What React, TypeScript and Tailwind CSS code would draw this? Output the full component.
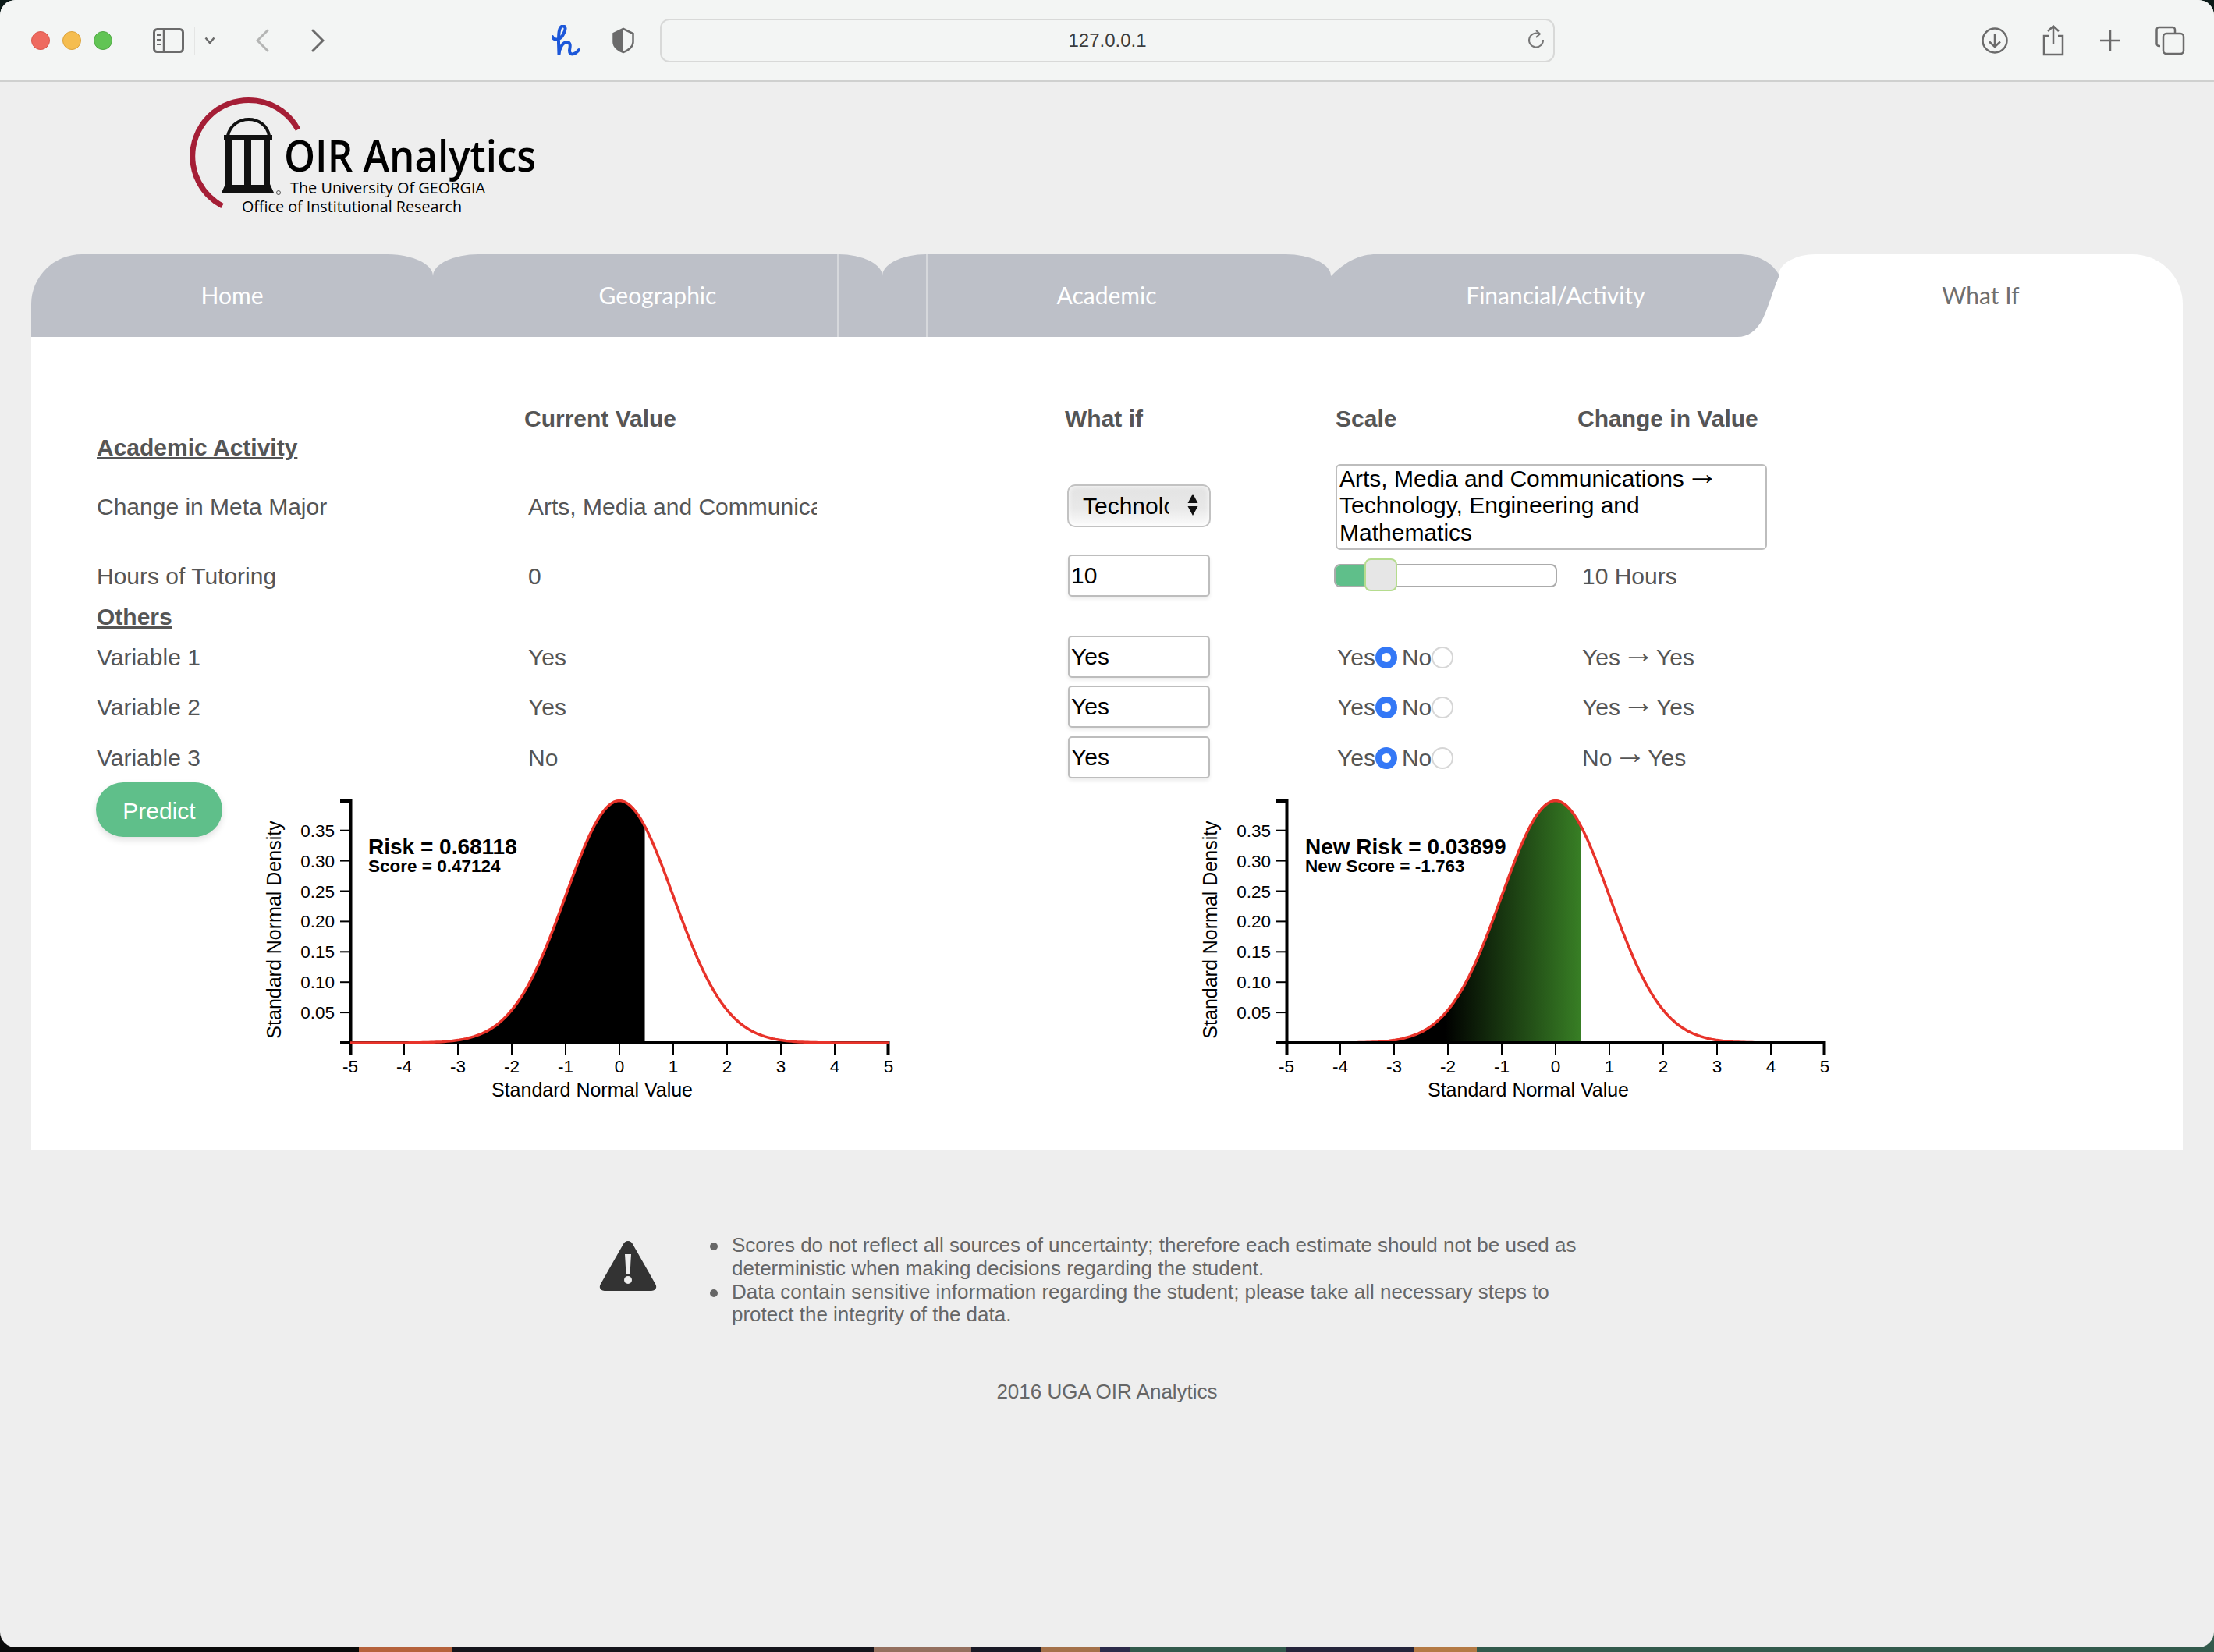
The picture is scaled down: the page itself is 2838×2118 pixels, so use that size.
import React from "react";

const sans = "font-['Liberation_Sans',Arial,sans-serif]";

function pdf(z: number) {
  return Math.exp((-z * z) / 2) / Math.sqrt(2 * Math.PI);
}
const X = (v: number) => 794 + v * 69;
const Y = (d: number) => 1337 - d * 778;

function curve(from: number, to: number) {
  const pts: string[] = [];
  for (let v = from; v <= to + 0.0001; v += 0.05) {
    pts.push(`${X(v).toFixed(1)} ${Y(pdf(v)).toFixed(1)}`);
  }
  return pts;
}

function Chart({ l1, l2, fill, grad, lx }: { l1: string; l2: string; fill: string; grad?: boolean; lx: number }) {
  const shade = [...curve(-5, 0.45), `${X(0.47124)} ${Y(pdf(0.47124))}`];
  const area = `M${X(-5)} 1337 L${shade.join(" L")} L${X(0.47124)} 1337 Z`;
  const ys = [0.05, 0.1, 0.15, 0.2, 0.25, 0.3, 0.35];
  const xs = [-5, -4, -3, -2, -1, 0, 1, 2, 3, 4, 5];
  const redLine = <path d={`M${curve(-5, 5).join(" L")}`} fill="none" stroke="#e8332a" strokeWidth="3.5" />;
  return (
    <svg width="830" height="410" viewBox="330 1010 830 410" className="shrink-0">
      {grad && (
        <defs>
          <linearGradient id="greenfade" gradientUnits="userSpaceOnUse" x1="652" x2="827" y1="0" y2="0">
            <stop offset="0" stopColor="#000000" />
            <stop offset="1" stopColor="#387f25" />
          </linearGradient>
        </defs>
      )}
      <path d={area} fill={fill} />
      {grad && redLine}
      <g fontFamily="'Liberation Sans',Arial,sans-serif" fill="#000">
        <path d="M436 1027H449.5V1337M436 1337H1138.5V1352M449.5 1337V1352" fill="none" stroke="#000" strokeWidth="4" />
        {ys.map((v) => (
          <g key={v}>
            <line x1="436" x2="449" y1={Y(v)} y2={Y(v)} stroke="#000" strokeWidth="2" />
            <text x="429" y={Y(v) + 8} textAnchor="end" fontSize="22.5">
              {v.toFixed(2)}
            </text>
          </g>
        ))}
        {xs.map((v) => (
          <g key={v}>
            <line x1={X(v)} x2={X(v)} y1="1337" y2="1352" stroke="#000" strokeWidth="2" />
            <text x={X(v)} y="1375" textAnchor="middle" fontSize="22.5">
              {v}
            </text>
          </g>
        ))}
        <text x="759" y="1406" textAnchor="middle" fontSize="25">
          Standard Normal Value
        </text>
        <text transform="translate(360 1192) rotate(-90)" textAnchor="middle" fontSize="25">
          Standard Normal Density
        </text>
        <text x={lx} y="1095" fontSize="28" fontWeight="700">
          {l1}
        </text>
        <text x={lx} y="1118" fontSize="22.5" fontWeight="700">
          {l2}
        </text>
      </g>
      {!grad && redLine}
    </svg>
  );
}

function Logo() {
  return (
    <svg width="460" height="160" viewBox="240 120 460 160" className="block">
      <path d="M382 166A72 72 0 1 0 285 264" fill="none" stroke="#a51e36" strokeWidth="7" />
      <path d="M292 174C298 146 340 146 345 174" fill="none" stroke="#111" strokeWidth="4" />
      <path d="M287 173H349V179H346V236L351 247H284L289 236V179H287Z" fill="#111" />
      <rect x="298" y="179" width="15" height="58" fill="#eeeeee" />
      <rect x="322" y="179" width="16" height="58" fill="#eeeeee" />
      <circle cx="357" cy="247" r="2.5" fill="none" stroke="#555" strokeWidth="1" />
      <g fontFamily="'Open Sans','Noto Sans',sans-serif" fill="#000">
        <text x="364" y="220" fontSize="56" fontWeight="600" textLength="323" lengthAdjust="spacingAndGlyphs">
          OIR Analytics
        </text>
        <text x="372" y="248" fontSize="20" fontWeight="500" textLength="250" lengthAdjust="spacingAndGlyphs">
          The University Of GEORGIA
        </text>
        <text x="310" y="272" fontSize="20" fontWeight="500" textLength="282" lengthAdjust="spacingAndGlyphs">
          Office of Institutional Research
        </text>
      </g>
    </svg>
  );
}

function Toolbar() {
  const gray = "#6b6b6b";
  return (
    <div className="flex h-[105px] shrink-0 items-center border-b-2 border-[#cfd0cf] bg-[#f3f5f4] pl-[40px]">
      <div className="h-[24px] w-[24px] rounded-full border border-[#d9574c] bg-[#ee6a5f]" />
      <div className="ml-[16px] h-[24px] w-[24px] rounded-full border border-[#dca33c] bg-[#f5bd4f]" />
      <div className="ml-[16px] h-[24px] w-[24px] rounded-full border border-[#51a845] bg-[#61c454]" />
      <svg width="40" height="32" viewBox="0 0 40 32" className="ml-[52px]">
        <rect x="1.5" y="1.5" width="37" height="29" rx="4" fill="none" stroke={gray} strokeWidth="3" />
        <line x1="14" x2="14" y1="2" y2="30" stroke={gray} strokeWidth="2.5" />
        <path d="M5 9h5M5 15h5M5 21h5" stroke={gray} strokeWidth="2" />
      </svg>
      <div className="ml-[13px] h-[36px] w-px bg-[#e4e5e4]" />
      <svg width="14" height="10" viewBox="0 0 14 10" className="ml-[12px]">
        <path d="M1.5 1.5L7 8L12.5 1.5" fill="none" stroke={gray} strokeWidth="2.5" />
      </svg>
      <svg width="17" height="30" viewBox="0 0 17 30" className="ml-[52px]">
        <path d="M15 2L2 15L15 28" fill="none" stroke="#b4b5b4" strokeWidth="3" strokeLinecap="round" />
      </svg>
      <svg width="17" height="30" viewBox="0 0 17 30" className="ml-[54px]">
        <path d="M2 2L15 15L2 28" fill="none" stroke={gray} strokeWidth="3" strokeLinecap="round" />
      </svg>
      <svg width="36" height="40" viewBox="0 0 36 40" className="ml-[291px]">
        <path d="M1 15C3 20 11 20 15 12C19 5 18 1 14 1.5C9 2 9 13 9 23L9.5 38C10 30 14 22 20 22C26 23 23 30 23 33C23 39 29 39 35 32" fill="none" stroke="#1c57d9" strokeWidth="4" strokeLinecap="round" />
      </svg>
      <svg width="28" height="34" viewBox="0 0 28 34" className="ml-[42px]">
        <path d="M14 2L26.5 8V19C26.5 25 20 30 14 32C8 30 1.5 25 1.5 19V8Z" fill="none" stroke={gray} strokeWidth="2.5" />
        <path d="M14 2L1.5 8V19C1.5 25 8 30 14 32Z" fill={gray} />
      </svg>
      <div className={`relative ml-[33px] flex h-[56px] w-[1147px] items-center justify-center rounded-[12px] border-2 border-[#d8d9d8] bg-[#f3f5f4] text-[24px] text-[#3c3c3c] ${sans}`}>
        <span>127.0.0.1</span>
        <svg width="26" height="28" viewBox="0 0 26 28" className="absolute right-[8px] top-[12px]">
          <path d="M16 5.5A9 9 0 1 0 21 13" fill="none" stroke="#777" strokeWidth="2" />
          <path d="M12 1L17 5.5L12 10" fill="none" stroke="#777" strokeWidth="2" />
        </svg>
      </div>
      <svg width="36" height="36" viewBox="0 0 36 36" className="ml-[546px]">
        <circle cx="18" cy="18" r="15.5" fill="none" stroke={gray} strokeWidth="2.5" />
        <path d="M18 9V26M11 19.5L18 26L25 19.5" fill="none" stroke={gray} strokeWidth="2.5" />
      </svg>
      <svg width="30" height="40" viewBox="0 0 30 40" className="ml-[42px]">
        <path d="M9 14H3V38H27V14H21" fill="none" stroke={gray} strokeWidth="2.5" />
        <path d="M15 25V2M8 8L15 1.5L22 8" fill="none" stroke={gray} strokeWidth="2.5" />
      </svg>
      <svg width="28" height="28" viewBox="0 0 28 28" className="ml-[44px]">
        <path d="M14 1V27M1 14H27" stroke={gray} strokeWidth="2.5" />
      </svg>
      <svg width="38" height="38" viewBox="0 0 38 38" className="ml-[44px]">
        <path d="M6 26H4.5A3 3 0 0 1 1.5 23V5A3 3 0 0 1 4.5 2H22A3 3 0 0 1 25 5V9" fill="none" stroke={gray} strokeWidth="2.5" />
        <rect x="10" y="10" width="26" height="26" rx="4" fill="none" stroke={gray} strokeWidth="2.5" />
      </svg>
    </div>
  );
}

function Tabs() {
  const tab = "flex h-full items-center justify-center pb-[2px] text-[30px] text-white bg-[#bdc0c8] font-['Lato',sans-serif]";
  return (
    <div className="mx-[40px] mt-[46px] flex h-[106px]">
      <div className={`${tab} w-[515px] rounded-[65px_58px_0_0/64px_28px_0_0]`}>Home</div>
      <div className={`${tab} relative w-[576px] rounded-[58px_56px_0_0/28px_28px_0_0]`}>
        Geographic
        <div className="absolute bottom-0 right-[56px] top-0 w-[2px] bg-[#d6d8dc]" />
      </div>
      <div className={`${tab} relative w-[575px] rounded-[56px_58px_0_0/28px_28px_0_0]`}>
        Academic
        <div className="absolute bottom-0 left-[56px] top-0 w-[2px] bg-[#d6d8dc]" />
      </div>
      <div className="relative h-full w-[574px]">
        <div className="absolute bottom-0 right-0 h-[78px] w-[60px] bg-white" />
        <div className={`${tab} relative w-[576px] [clip-path:path('M0_28C20_8_38_0_58_0H521C548_0_565_10_575_27C568_42_560_70_554_82C546_98_535_106_521_106H0Z')]`}>
          Financial/Activity
        </div>
      </div>
      <div className="flex h-full w-[518px] items-center justify-center rounded-[47px_65px_0_0/27px_64px_0_0] bg-white pb-[2px] font-['Lato',sans-serif] text-[30px] text-[#6f6f6f]">
        What If
      </div>
    </div>
  );
}

const grid = "grid grid-cols-[548px_693px_347px_310px_1fr] items-center";

function Arrow() {
  return <span className="mx-[2px] inline-block h-[20px] -translate-y-[3px] text-[42px] leading-[20px]">→</span>;
}

function ValueInput({ value }: { value: string }) {
  return (
    <input
      readOnly
      value={value}
      className={`ml-[4px] h-[54px] w-[182px] rounded-[5px] border-2 border-[#bdbdbd] bg-white pl-[2px] text-[30px] text-black shadow-[0_3px_5px_rgba(0,0,0,0.08)] outline-none ${sans}`}
    />
  );
}

function Radio({ on }: { on: boolean }) {
  return on ? (
    <span className="mt-[2px] inline-block h-[28px] w-[28px] rounded-full border-[8px] border-[#3478f6] bg-white" />
  ) : (
    <span className="mt-[2px] inline-block h-[28px] w-[28px] rounded-full border-2 border-[#d6d6d6] bg-white" />
  );
}

function VarRow({ name, cur, from, mt }: { name: string; cur: string; from: string; mt: string }) {
  return (
    <div className={`${grid} h-[54px] ${mt}`}>
      <div>{name}</div>
      <div className="pl-[5px]">{cur}</div>
      <div>
        <ValueInput value="Yes" />
      </div>
      <div className="flex items-center pl-[2px]">
        <span>Yes</span>
        <span className="flex"><Radio on /></span>
        <span className="ml-[6px]">No</span>
        <span className="flex"><Radio on={false} /></span>
      </div>
      <div className="pl-[6px]">
        {from}
        <Arrow />
        Yes
      </div>
    </div>
  );
}

function Panel() {
  return (
    <div className={`mx-[40px] h-[1042px] bg-white pl-[84px] pt-[82px] text-[30px] text-[#555] ${sans}`}>
      <div className={`${grid} h-[36px] font-bold`}>
        <div />
        <div>Current Value</div>
        <div>What if</div>
        <div>Scale</div>
        <div>Change in Value</div>
      </div>
      <div className="mt-[4px] flex h-[38px] items-center font-bold underline">Academic Activity</div>
      <div className={`${grid} mt-[3px] h-[110px]`}>
        <div className="pb-[2px]">Change in Meta Major</div>
        <div className="pb-[2px] pl-[5px]">
          <div className="w-[370px] overflow-hidden whitespace-nowrap">Arts, Media and Communications</div>
        </div>
        <div className="relative mb-[4px]">
          <select className={`ml-[3px] block h-[55px] w-[184px] appearance-none rounded-[10px] border-2 border-[#c2c2c2] bg-[linear-gradient(#e3e3e3,#e8e8e8_55%,#fbfbfb)] pl-[18px] pr-[52px] text-[30px] text-black shadow-[inset_0_0_7px_rgba(255,255,255,0.9)] outline-none ${sans}`}>
            <option>Technology, Engineering and Mathematics</option>
          </select>
          <svg width="14" height="28" viewBox="0 0 14 28" className="absolute left-[157px] top-[12px]">
            <path d="M7 0L13.5 12H0.5ZM7 28L0.5 16H13.5Z" fill="#111" />
          </svg>
        </div>
        <div className="h-[110px] w-[553px] rounded-[6px] border-2 border-[#bdbdbd] bg-white px-[3px] leading-[34.4px] text-black">
          Arts, Media and Communications
          <Arrow />
          <br />
          Technology, Engineering and Mathematics
        </div>
        <div />
      </div>
      <div className={`${grid} mt-[6px] h-[54px]`}>
        <div>Hours of Tutoring</div>
        <div className="pl-[5px]">0</div>
        <div>
          <ValueInput value="10" />
        </div>
        <div className="relative -ml-[2px] h-[30px] w-[286px] rounded-[8px] border-2 border-[#ababab] bg-white">
          <div className="h-full w-[38px] rounded-l-[6px] bg-[#5fbf8a]" />
          <div className="absolute left-[37px] top-[-9px] h-[42px] w-[42px] rounded-[8px] border-2 border-[#b5dc8e] bg-[#e6e6e6]" />
        </div>
        <div className="pl-[6px]">10 Hours</div>
      </div>
      <div className="mt-[9px] flex h-[32px] items-center font-bold underline">Others</div>
      <VarRow name="Variable 1" cur="Yes" from="Yes" mt="mt-[9px]" />
      <VarRow name="Variable 2" cur="Yes" from="Yes" mt="mt-[10px]" />
      <VarRow name="Variable 3" cur="No" from="No" mt="mt-[11px]" />
      <div className="mt-[5px] flex items-start">
        <button className="-ml-[1px] h-[70px] w-[162px] shrink-0 rounded-[35px] bg-[#5fbf8a] pt-[2px] text-[30px] text-white shadow-[0_4px_8px_rgba(0,0,0,0.12)]">
          Predict
        </button>
        <div className="ml-[45px] mt-[7px] flex">
          <Chart l1="Risk = 0.68118" l2="Score = 0.47124" fill="#000" lx={472} />
          <div className="ml-[370px]">
            <Chart l1="New Risk = 0.03899" l2="New Score = -1.763" fill="url(#greenfade)" grad lx={473} />
          </div>
        </div>
      </div>
    </div>
  );
}

function Bullet({ children }: { children: React.ReactNode }) {
  return (
    <li className="flex">
      <span className="ml-[-28px] mr-[18px] mt-[11px] h-[10px] w-[10px] shrink-0 rounded-full bg-[#666]" />
      <span>{children}</span>
    </li>
  );
}

function Footer() {
  return (
    <div className={`text-[#666] ${sans}`}>
      <div className="ml-[768px] mt-[108px] flex">
        <svg width="74" height="66" viewBox="0 0 74 66" className="mt-[8px] shrink-0">
          <path d="M37 1C40 1 42 3 43 5L72 56C75 61 72 65 67 65H7C2 65 -1 61 2 56L31 5C32 3 34 1 37 1Z" fill="#333" />
          <path d="M33 18H41L39.5 43H34.5Z" fill="#eee" />
          <circle cx="37" cy="51" r="5" fill="#eee" />
        </svg>
        <ul className="ml-[96px] w-[1100px] text-[26px] leading-[29.8px]">
          <Bullet>Scores do not reflect all sources of uncertainty; therefore each estimate should not be used as deterministic when making decisions regarding the student.</Bullet>
          <Bullet>Data contain sensitive information regarding the student; please take all necessary steps to protect the integrity of the data.</Bullet>
        </ul>
      </div>
      <div className="mt-[68px] text-center text-[26px] leading-[30px]">2016 UGA OIR Analytics</div>
    </div>
  );
}

function Wallpaper() {
  const bits: [string, string][] = [
    ["w-[460px]", "bg-[#0a0a0a]"],
    ["w-[120px]", "bg-[#b5623c]"],
    ["w-[540px]", "bg-[#16151c]"],
    ["w-[125px]", "bg-[#94705f]"],
    ["w-[90px]", "bg-[#1a1a26]"],
    ["w-[75px]", "bg-[#a4714a]"],
    ["w-[38px]", "bg-[#2d2c4a]"],
    ["w-[200px]", "bg-[#325a4c]"],
    ["w-[165px]", "bg-[#25253b]"],
    ["w-[80px]", "bg-[#b47a45]"],
    ["flex-1", "bg-[#325a4c]"],
  ];
  return (
    <div className="absolute inset-x-0 bottom-0 flex h-[40px]">
      {bits.map(([w, c], i) => (
        <div key={i} className={`${w} ${c}`} />
      ))}
    </div>
  );
}

export default function App() {
  return (
    <div className="relative h-[2118px] w-[2838px] overflow-hidden bg-[#0b1a18]">
      <Wallpaper />
      <div className="relative flex h-[2112px] flex-col overflow-hidden rounded-[20px] bg-[#eeeeee]">
        <Toolbar />
        <div className="ml-[240px] mt-[15px] h-[160px]">
          <Logo />
        </div>
        <Tabs />
        <Panel />
        <Footer />
      </div>
    </div>
  );
}
